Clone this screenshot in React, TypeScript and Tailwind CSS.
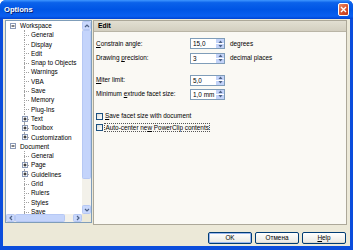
import React from "react";

type Node = { t: string; lvl: 0 | 1; box?: "+" | "-"; last?: boolean };

const tree: Node[] = [
  { t: "Workspace", lvl: 0, box: "-" },
  { t: "General", lvl: 1 },
  { t: "Display", lvl: 1 },
  { t: "Edit", lvl: 1 },
  { t: "Snap to Objects", lvl: 1 },
  { t: "Warnings", lvl: 1 },
  { t: "VBA", lvl: 1 },
  { t: "Save", lvl: 1 },
  { t: "Memory", lvl: 1 },
  { t: "Plug-Ins", lvl: 1 },
  { t: "Text", lvl: 1, box: "+" },
  { t: "Toolbox", lvl: 1, box: "+" },
  { t: "Customization", lvl: 1, box: "+", last: true },
  { t: "Document", lvl: 0, box: "-" },
  { t: "General", lvl: 1 },
  { t: "Page", lvl: 1, box: "+" },
  { t: "Guidelines", lvl: 1, box: "+" },
  { t: "Grid", lvl: 1 },
  { t: "Rulers", lvl: 1 },
  { t: "Styles", lvl: 1 },
  { t: "Save", lvl: 1 },
];

function ExpandBox({ kind }: { kind: "+" | "-" }) {
  return (
    <svg width="6" height="6" viewBox="0 0 6 6">
      <rect x="0.5" y="0.5" width="5" height="5" fill="#fff" stroke="#8c9bb8" strokeWidth="1" />
      <path d="M1.5 3H4.5" stroke="#000" strokeWidth="1" />
      {kind === "+" && <path d="M3 1.5V4.5" stroke="#000" strokeWidth="1" />}
    </svg>
  );
}

function TreeRow({ n }: { n: Node }) {
  if (n.lvl === 0) {
    return (
      <div className="relative flex h-[9.3px] items-center pl-[14px] whitespace-nowrap leading-[9.3px]">
        <div className="absolute left-[4px] top-[1.5px]">
          <ExpandBox kind={n.box || "-"} />
        </div>
        {n.t}
      </div>
    );
  }
  return (
    <div className="relative flex h-[9.3px] items-center pl-[25px] whitespace-nowrap leading-[9.3px]">
      <div
        className={
          n.last
            ? "absolute left-[18px] top-0 h-[4.6px] border-l border-dotted border-[#a0a0a0]"
            : "absolute left-[18px] top-0 h-full border-l border-dotted border-[#a0a0a0]"
        }
      />
      <div className="absolute left-[18px] top-[4.6px] w-[5px] border-t border-dotted border-[#a0a0a0]" />
      {n.box && (
        <div className="absolute left-[16px] top-[1.6px]">
          <ExpandBox kind={n.box} />
        </div>
      )}
      {n.t}
    </div>
  );
}

function Arrow({ dir }: { dir: "up" | "down" | "left" | "right" }) {
  const d =
    dir === "up"
      ? "M1 4L3 2L5 4"
      : dir === "down"
      ? "M1 2L3 4L5 2"
      : dir === "left"
      ? "M4 1L2 3L4 5"
      : "M2 1L4 3L2 5";
  return (
    <svg width="6" height="6" viewBox="0 0 6 6">
      <path d={d} fill="none" stroke="#4d6185" strokeWidth="1.2" />
    </svg>
  );
}

function SBtn({ dir }: { dir: "up" | "down" | "left" | "right" }) {
  return (
    <div className="flex h-[9px] w-[9px] items-center justify-center rounded-[1.5px] border border-[#b6c8f4] bg-[#c9d8fc]">
      <Arrow dir={dir} />
    </div>
  );
}

function Spin({ value }: { value: string }) {
  return (
    <div className="flex h-[11px] w-[35px] border border-[#7f9db9] bg-white">
      <div className="flex-1 pl-[2px] leading-[9px]">{value}</div>
      <div className="flex w-[9px] flex-col border-l border-white">
        <div className="flex flex-1 items-center justify-center border-b border-white bg-[#c3d3f9]">
          <svg width="5" height="3" viewBox="0 0 5 3">
            <path d="M0.5 3L2.5 0.5L4.5 3Z" fill="#4d6185" />
          </svg>
        </div>
        <div className="flex flex-1 items-center justify-center bg-[#c3d3f9]">
          <svg width="5" height="3" viewBox="0 0 5 3">
            <path d="M0.5 0L2.5 2.5L4.5 0Z" fill="#4d6185" />
          </svg>
        </div>
      </div>
    </div>
  );
}

function Check() {
  return <div className="h-[7px] w-[7px] border border-[#1c5180] bg-[linear-gradient(135deg,#dcdcd7,#ffffff)]" />;
}

function Btn({ children, def }: { children: React.ReactNode; def?: boolean }) {
  return (
    <div
      className={
        "flex h-[12px] w-[44px] items-center justify-center rounded-[2px] border border-[#003c74] bg-[linear-gradient(180deg,#ffffff,#ecebe6_85%,#d6d0c5)] leading-none " +
        (def ? "shadow-[inset_0_0_0_1px_#9bb7ee]" : "")
      }
    >
      {children}
    </div>
  );
}

export default function App() {
  return (
    <div className="h-[250px] w-[353px] overflow-hidden bg-white font-['Liberation_Sans',Arial,sans-serif] text-[6.4px] text-black">
      <div className="flex h-full flex-col rounded-t-[6px] bg-[#0b4ddc]">
        <div className="flex h-[19px] items-center justify-between rounded-t-[6px] bg-[linear-gradient(180deg,#3f97ff_0%,#0b62ea_14%,#0055e5_50%,#0a5ff0_85%,#0042d2_100%)] pl-[4px] pr-[4px]">
          <span className="text-[7.6px] font-bold text-white [text-shadow:1px_1px_0_#0a2270]">Options</span>
          <div className="flex h-[13px] w-[11px] items-center justify-center rounded-[2px] border border-white bg-[linear-gradient(135deg,#ec8a66,#d9532d_55%,#c2381a)]">
            <svg width="7" height="7" viewBox="0 0 7 7">
              <path d="M1 1L6 6M6 1L1 6" stroke="#fff" strokeWidth="1.4" />
            </svg>
          </div>
        </div>
        <div className="mx-[3px] mb-[4px] flex flex-1 flex-col bg-[#ece9d8]">
          <div className="flex gap-[1px] pl-[2px] pr-[3px] pt-[1px]">
            {/* tree */}
            <div className="flex h-[203px] w-[87px] flex-col border border-[#7f9db9] bg-white">
              <div className="flex h-[193px]">
                <div className="flex-1 overflow-hidden">
                  {tree.map((n, i) => (
                    <TreeRow key={i} n={n} />
                  ))}
                </div>
                <div className="flex w-[9px] flex-col bg-[#f3f1ea]">
                  <SBtn dir="up" />
                  <div className="flex flex-1 flex-col">
                    <div className="h-[149px] rounded-[1.5px] border border-[#b6c8f4] bg-[#c4d4fb]" />
                  </div>
                  <SBtn dir="down" />
                </div>
              </div>
              <div className="flex h-[8px]">
                <div className="flex flex-1 bg-[#f3f1ea]">
                  <div className="flex h-[8px] w-[9px] items-center justify-center rounded-[1.5px] border border-[#b6c8f4] bg-[#c9d8fc]">
                    <Arrow dir="left" />
                  </div>
                  <div className="h-[8px] w-[50px] rounded-[1.5px] border border-[#b6c8f4] bg-[#c4d4fb]" />
                  <div className="flex-1" />
                  <div className="flex h-[8px] w-[9px] items-center justify-center rounded-[1.5px] border border-[#b6c8f4] bg-[#c9d8fc]">
                    <Arrow dir="right" />
                  </div>
                </div>
                <div className="w-[9px] bg-[#ece9d8]" />
              </div>
            </div>
            {/* panel */}
            <div className="flex h-[205px] flex-1 flex-col border border-[#aca899] bg-[#faf9f4]">
              <div className="flex h-[11px] items-center border-b border-[#b9b5a6] bg-[linear-gradient(180deg,#e2dfd2,#d3cfc0)] pl-[4px] text-[6.8px] font-bold">
                Edit
              </div>
              <div className="flex flex-col pl-[2px] pt-[6px]">
                <div className="flex h-[11px] items-center">
                  <span className="w-[94px]">
                    <u>C</u>onstrain angle:
                  </span>
                  <Spin value="15,0" />
                  <span className="ml-[5px]">degrees</span>
                </div>
                <div className="mt-[3.5px] flex h-[11px] items-center">
                  <span className="w-[94px]">
                    Drawing <u>p</u>recision:
                  </span>
                  <Spin value="3" />
                  <span className="ml-[5px]">decimal places</span>
                </div>
                <div className="mt-[11px] flex h-[11px] items-center">
                  <span className="w-[94px]">
                    <u>M</u>iter limit:
                  </span>
                  <Spin value="5,0" />
                </div>
                <div className="mt-[3px] flex h-[11px] items-center">
                  <span className="w-[94px]">
                    Minimum <u>e</u>xtrude facet size:
                  </span>
                  <Spin value="1,0 mm" />
                </div>
                <div className="mt-[12px] flex h-[9px] items-center gap-[2px]">
                  <Check />
                  <span>
                    <u>S</u>ave facet size with document
                  </span>
                </div>
                <div className="mt-[2px] flex h-[9px] items-center gap-[1px]">
                  <Check />
                  <span className="border border-dotted border-[#555] px-[0.5px] leading-[7px]">
                    Auto-center ne<u>w</u> PowerClip contents
                  </span>
                </div>
              </div>
            </div>
          </div>
          <div className="mt-[7px] flex justify-end gap-[3px] pr-[4px]">
            <Btn def>OK</Btn>
            <Btn>Отмена</Btn>
            <Btn>
              <span>
                <u>H</u>elp
              </span>
            </Btn>
          </div>
        </div>
      </div>
    </div>
  );
}
